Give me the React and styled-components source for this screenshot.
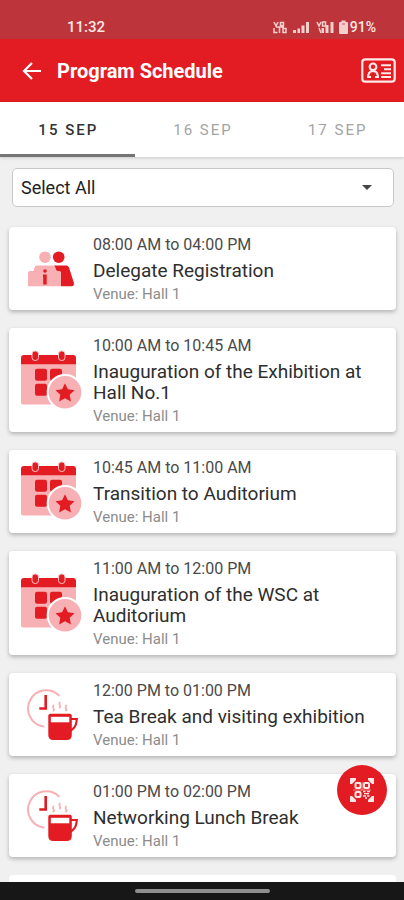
import React, { useState } from "react";
import styled, { createGlobalStyle } from "styled-components";

const RED = "#e21c22";
const PINK = "#f7b0b3";

const GlobalStyle = createGlobalStyle`
  *, *::before, *::after { box-sizing: border-box; }
  body { margin: 0; font-family: Roboto, "Noto Sans", sans-serif; color: #222; }
  button, select { font: inherit; color: inherit; }
  h1, h2, p, ul { margin: 0; padding: 0; }
`;

const Screen = styled.div`
  position: relative;
  display: flex;
  flex-direction: column;
  height: 100vh;
  background: #f0f0f0;
`;

const StatusBar = styled.div`
  display: flex;
  align-items: center;
  justify-content: space-between;
  flex: none;
  padding: 17px 28px 2px 67px;
  background: #bd343a;
  color: #ffe9e6;
  font-size: 15px;
  line-height: 20px;
  font-weight: 500;
`;

const StatusGroup = styled.div`
  display: flex;
  align-items: center;
  gap: 1px;
  font-size: 14px;
`;

const AppBar = styled.header`
  display: flex;
  align-items: center;
  flex: none;
  height: 63px;
  padding: 0 8px 0 20px;
  background: ${RED};
  color: #fff;
`;

const IconButton = styled.button`
  display: flex;
  padding: 0;
  border: 0;
  background: none;
  cursor: pointer;
`;

const Title = styled.h1`
  flex: 1;
  padding-left: 13px;
  font-size: 20px;
  line-height: 24px;
  font-weight: 700;
`;

const Tabs = styled.div`
  display: grid;
  grid-template-columns: repeat(3, 1fr);
  flex: none;
  height: 55px;
  background: #fff;
  box-shadow: 0 1px 3px rgba(0, 0, 0, 0.16);
`;

const Tab = styled.button`
  padding: 3px 0 0 2px;
  border: 0;
  border-bottom: 3px solid ${(p) => (p.$active ? "#757575" : "transparent")};
  background: none;
  color: ${(p) => (p.$active ? "#333" : "#a3a3a3")};
  font-size: 15px;
  line-height: 20px;
  font-weight: ${(p) => (p.$active ? 500 : 400)};
  letter-spacing: 2px;
  cursor: pointer;
`;

const List = styled.main`
  flex: 1;
  min-height: 0;
  overflow: hidden auto;
  scrollbar-width: none;
  padding: 11px 8px 18px 9px;
`;

const Filter = styled.label`
  display: grid;
  align-items: center;
  margin: 0 2px 20px 3px;
  > * { grid-area: 1 / 1; }
  > svg { justify-self: end; margin-right: 21px; pointer-events: none; }
`;

const FilterSelect = styled.select`
  appearance: none;
  width: 100%;
  height: 39px;
  padding: 0 40px 0 8px;
  border: 1px solid #c9c9c9;
  border-radius: 5px;
  background: #fff;
  font-size: 18px;
`;

const Sessions = styled.ul`
  display: flex;
  flex-direction: column;
  gap: 18px;
  list-style: none;
`;

const Card = styled.li`
  display: grid;
  grid-template-columns: 64px 1fr;
  align-items: center;
  column-gap: 10px;
  padding: 8px 16px 7px 10px;
  border-radius: 4px;
  background: #fff;
  box-shadow: 0 2px 4px rgba(0, 0, 0, 0.26);
`;

const IconSlot = styled.div`
  display: flex;
  align-items: center;
  height: 0;
`;

const Time = styled.p`
  font-size: 16px;
  line-height: 20px;
  color: #4a4a4a;
`;

const SessionTitle = styled.h2`
  margin: 5px 0 4px;
  font-size: 19px;
  line-height: 21px;
  font-weight: 400;
  color: #2e2e2e;
`;

const Venue = styled.p`
  font-size: 15px;
  line-height: 18px;
  color: #8c8c8c;
`;

const ScanButton = styled.button`
  position: absolute;
  right: 17px;
  bottom: 85px;
  display: flex;
  align-items: center;
  justify-content: center;
  width: 50px;
  height: 50px;
  padding: 0;
  border: 0;
  border-radius: 50%;
  background: ${RED};
  cursor: pointer;
`;

const NavBar = styled.div`
  display: flex;
  align-items: center;
  justify-content: center;
  flex: none;
  height: 18px;
  background: #171717;
`;

const Handle = styled.div`
  width: 135px;
  height: 4px;
  border-radius: 2px;
  background: #8f8f8f;
`;

const SignalIcons = () => (
  <svg width="76" height="16" viewBox="0 0 76 16" fill="#f3cfcd" aria-hidden="true">
    <g stroke="#f3cfcd" strokeWidth="1.500" fill="none">
      <path d="M1 3l2 4 2-4M7.500 3.500h3v3h-3zM1 9v4.500h3.500M6.500 8v6M10 9.500h3v4h-3zM3 8h8" />
      <path d="M44 3l2 4 2-4M49.500 3h3v4h-3zM46 9l2 5" />
    </g>
    <path d="M20 11h3v3h-3zM24.500 9.500h2.500v4.500h-2.500zM28.500 6.500h3V14h-3zM33 3h3v11h-3zM48.500 9h2.500v5h-2.500zM52.500 6h3v8h-3zM57.500 3h3v11h-3z" />
    <path d="M68.500 1.500h4v1.500h1.500q1 0 1 1v10q0 1-1 1h-7q-1 0-1-1V4q0-1 1-1h1.500z" />
    <path d="M69 4h3v2h-3z" fill="#bd343a" opacity=".4" />
  </svg>
);

const BackIcon = () => (
  <svg width="24" height="24" viewBox="0 0 24 24" fill="none" stroke="#fff" strokeWidth="2.200" aria-hidden="true">
    <path d="M21 12H4.500M12 4l-8 8 8 8" />
  </svg>
);

const BadgeIcon = () => (
  <svg width="35" height="25" viewBox="0 0 35 25" fill="none" stroke="#ffeae8" strokeWidth="2.200" aria-hidden="true">
    <rect x="1.300" y="1.300" width="32.400" height="22.400" rx="3" />
    <circle cx="12" cy="8.800" r="3.300" />
    <path d="M7 20c0-4.500 2-7 5-7s5 2.500 5 7M7 19h3M14 19h3M20 7.200h10M23 11.200h7M20 15.200h10M20 19h10" strokeWidth="2" />
  </svg>
);

const DelegateIcon = () => (
  <svg width="64" height="64" viewBox="0 0 64 64" aria-hidden="true">
    <circle cx="39.700" cy="20.200" r="5.800" fill={RED} />
    <path d="M35 28.500h12.300q2 0 2.700 2l4.800 15q1 3.700-2.300 3.700H42V35l-5-1.500z" fill={RED} />
    <circle cx="26" cy="20.200" r="5.800" fill={PINK} />
    <path d="M9 36q0-2 2-2h3.500l1-3.500q.500-2 2.500-2h16q1.800 0 2.400 2L37.500 34H40q2 0 2 2v13.200H9z" fill={PINK} />
    <circle cx="26" cy="34" r="1.800" fill={RED} />
    <path d="M24 37.500h3.700v10h-3.500V40H24z" fill={RED} />
  </svg>
);

const STAR = "M46 34.200l2.900 6.100 6.600.900-4.800 4.600 1.200 6.600-5.900-3.200-5.900 3.200 1.200-6.600-4.800-4.600 6.600-.900z";

const CalendarIcon = () => (
  <svg width="64" height="64" viewBox="0 0 64 64" aria-hidden="true">
    <path d="M2 12h55v41.500q0 2-2 2H4q-2 0-2-2z" fill={PINK} />
    <path d="M2 15.300V9q0-3 3-3h49q3 0 3 3v6.300z" fill={RED} />
    <g fill={RED} stroke="#f9c3c5" strokeWidth="1">
      <rect x="13" y="2" width="6.500" height="9.500" rx="3" />
      <rect x="39.500" y="2" width="6.500" height="9.500" rx="3" />
    </g>
    <g fill={RED}>
      <rect x="16" y="19.700" width="12" height="12" rx="2" />
      <rect x="31" y="19.700" width="12" height="12" rx="2" />
      <rect x="16" y="34.700" width="12" height="12" rx="2" />
    </g>
    <circle cx="46" cy="43.300" r="17.300" fill={PINK} stroke="#fff" strokeWidth="2" />
    <path d={STAR} fill={RED} />
  </svg>
);

const BreakIcon = () => (
  <svg width="64" height="64" viewBox="0 0 64 64" fill="none" aria-hidden="true">
    <g stroke={PINK} strokeWidth="2" strokeLinecap="round">
      <path d="M39.800 12.300A18.200 18.200 0 1 0 24.500 43.500" />
      <path d="M34.500 22.500q-1 1.500 0 3t0 2M40.800 19.500q-1 1.500 0 3t0 2M47 22.500q-1 1.500 0 3t0 2" strokeWidth="1.800" />
    </g>
    <path d="M26.700 12v13.500h-6.400" stroke={RED} strokeWidth="2.600" />
    <path d="M52 36h5.800q-.500 6.500-3 9t-4.500 3.500" stroke={RED} strokeWidth="2.200" />
    <path d="M31.300 30.700h19.500q2 0 2 2V52q0 5-5 5H34.300q-5 0-5-5V32.700q0-2 2-2z" fill={RED} />
    <path d="M31.800 33.800h18.500v5.500H31.800z" fill="#fff" />
  </svg>
);

const ScanIcon = () => (
  <svg width="24" height="24" viewBox="0 0 24 24" fill="none" stroke="#ffe5e3" strokeWidth="2" aria-hidden="true">
    <path d="M0 0h6v2L2 6H0zM24 0h-6v2l4 4h2zM0 24h6v-2l-4-4H0zM24 24h-6v-2l4-4h2z" fill="#ffe5e3" stroke="none" />
    <rect x="5.500" y="5" width="5" height="5" rx="1" />
    <rect x="14" y="5" width="5" height="5" rx="1" />
    <rect x="5.500" y="14" width="5" height="5" rx="1" />
    <path d="M13 13.500h2.500M17 13.500h3M14 15.700h5M13 18h3M17 18h2.500M15 20h2" strokeWidth="1.300" />
    <path d="M3 12h18M12.200 4v8" strokeWidth="1" opacity=".5" />
  </svg>
);

const CaretIcon = () => (
  <svg width="12" height="7" viewBox="0 0 12 7" aria-hidden="true">
    <path d="M1 1h10L6 6z" fill="#444" />
  </svg>
);

const ICONS = { delegate: DelegateIcon, calendar: CalendarIcon, pause: BreakIcon };

const DAYS = ["15 SEP", "16 SEP", "17 SEP"];

const SESSIONS = [
  { icon: "delegate", time: "08:00 AM to 04:00 PM", title: "Delegate Registration" },
  { icon: "calendar", time: "10:00 AM to 10:45 AM", title: "Inauguration of the Exhibition at Hall No.1" },
  { icon: "calendar", time: "10:45 AM to 11:00 AM", title: "Transition to Auditorium" },
  { icon: "calendar", time: "11:00 AM to 12:00 PM", title: "Inauguration of the WSC at Auditorium" },
  { icon: "pause", time: "12:00 PM to 01:00 PM", title: "Tea Break and visiting exhibition" },
  { icon: "pause", time: "01:00 PM to 02:00 PM", title: "Networking Lunch Break" },
];

const EmptyCard = styled.li`
  height: 83px;
  border-radius: 4px;
  background: #fff;
`;

function Session({ icon, time, title }) {
  const Icon = ICONS[icon];
  return (
    <Card>
      <IconSlot><Icon /></IconSlot>
      <div>
        <Time>{time}</Time>
        <SessionTitle>{title}</SessionTitle>
        <Venue>Venue: Hall 1</Venue>
      </div>
    </Card>
  );
}

export default function App() {
  const [day, setDay] = useState(DAYS[0]);
  return (
    <Screen>
      <GlobalStyle />
      <StatusBar>
        <span>11:32</span>
        <StatusGroup><SignalIcons /><span>91%</span></StatusGroup>
      </StatusBar>
      <AppBar>
        <IconButton aria-label="Back"><BackIcon /></IconButton>
        <Title>Program Schedule</Title>
        <IconButton aria-label="My badge"><BadgeIcon /></IconButton>
      </AppBar>
      <Tabs role="tablist">
        {DAYS.map((d) => (
          <Tab key={d} role="tab" aria-selected={d === day} $active={d === day} onClick={() => setDay(d)}>
            {d}
          </Tab>
        ))}
      </Tabs>
      <List>
        <Filter>
          <FilterSelect aria-label="Filter sessions">
            <option>Select All</option>
          </FilterSelect>
          <CaretIcon />
        </Filter>
        <Sessions>
          {SESSIONS.map((s) => <Session key={s.time} {...s} />)}
          <EmptyCard />
        </Sessions>
      </List>
      <ScanButton aria-label="Scan code"><ScanIcon /></ScanButton>
      <NavBar><Handle /></NavBar>
    </Screen>
  );
}
